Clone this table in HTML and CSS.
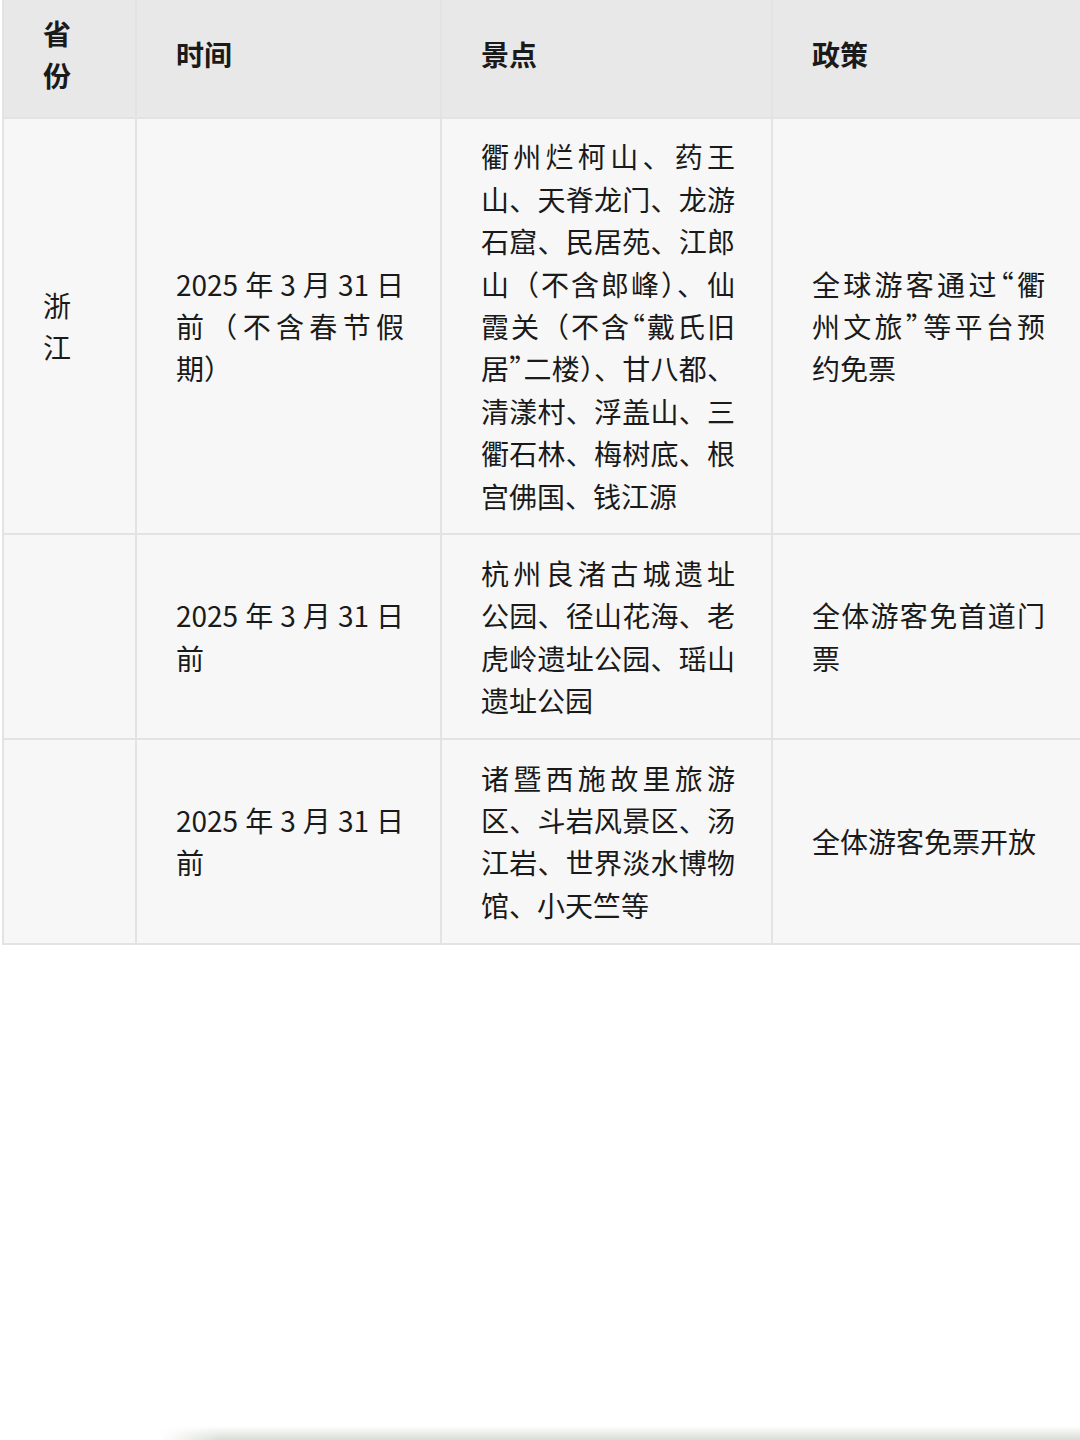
FILE: index.html
```html
<!DOCTYPE html>
<html lang="zh-CN">
<head>
<meta charset="utf-8">
<title>免票政策</title>
<link rel="stylesheet" href="styles.css">
</head>
<body>
<div class="page">
  <div class="table">
    <div class="cell head"><div class="txt"><span class="ln end">省</span><span class="ln end">份</span></div></div>
    <div class="cell head"><div class="txt"><span class="ln end">时间</span></div></div>
    <div class="cell head"><div class="txt"><span class="ln end">景点</span></div></div>
    <div class="cell head"><div class="txt"><span class="ln end">政策</span></div></div>

    <div class="cell"><div class="txt"><span class="ln end">浙</span><span class="ln end">江</span></div></div>
    <div class="cell"><div class="txt">
      <span class="ln">2025年3月31日</span>
      <span class="ln">前（不含春节假</span>
      <span class="ln end">期）</span>
    </div></div>
    <div class="cell"><div class="txt">
      <span class="ln">衢州烂柯山、药王</span>
      <span class="ln">山、天脊龙门、龙游</span>
      <span class="ln">石窟、民居苑、江郎</span>
      <span class="ln">山（不含郎峰）、仙</span>
      <span class="ln">霞关（不含<span class="q">“</span>戴氏旧</span>
      <span class="ln">居<span class="q">”</span>二楼）、甘八都、</span>
      <span class="ln">清漾村、浮盖山、三</span>
      <span class="ln">衢石林、梅树底、根</span>
      <span class="ln end">宫佛国、钱江源</span>
    </div></div>
    <div class="cell"><div class="txt">
      <span class="ln">全球游客通过<span class="q">“</span>衢</span>
      <span class="ln">州文旅<span class="q">”</span>等平台预</span>
      <span class="ln end">约免票</span>
    </div></div>

    <div class="cell"></div>
    <div class="cell"><div class="txt">
      <span class="ln">2025年3月31日</span>
      <span class="ln end">前</span>
    </div></div>
    <div class="cell"><div class="txt">
      <span class="ln">杭州良渚古城遗址</span>
      <span class="ln">公园、径山花海、老</span>
      <span class="ln">虎岭遗址公园、瑶山</span>
      <span class="ln end">遗址公园</span>
    </div></div>
    <div class="cell"><div class="txt">
      <span class="ln">全体游客免首道门</span>
      <span class="ln end">票</span>
    </div></div>

    <div class="cell"></div>
    <div class="cell"><div class="txt">
      <span class="ln">2025年3月31日</span>
      <span class="ln end">前</span>
    </div></div>
    <div class="cell"><div class="txt">
      <span class="ln">诸暨西施故里旅游</span>
      <span class="ln">区、斗岩风景区、汤</span>
      <span class="ln">江岩、世界淡水博物</span>
      <span class="ln end">馆、小天竺等</span>
    </div></div>
    <div class="cell"><div class="txt">
      <span class="ln end">全体游客免票开放</span>
    </div></div>
  </div>
  <div class="shadow"></div>
</div>
</body>
</html>
```

FILE: styles.css
```css
html, body {
  margin: 0;
  padding: 0;
  background: #ffffff;
}

.page {
  width: 1080px;
  height: 1440px;
  overflow: hidden;
  display: flex;
  flex-direction: column;
  font-family: "Noto Sans CJK SC", "Noto Sans", sans-serif;
  color: #1a1a1a;
}

.table {
  display: grid;
  grid-template-columns: 131px 303px 329px 308px;
  gap: 2px;
  margin-left: 2px;
  padding: 0 2px 2px 2px;
  background: #e3e3e3;
  width: max-content;
  font-size: 28px;
  line-height: 42.4px;
}

.cell {
  background: #f7f7f7;
  padding: 16.5px 36px 16.5px 39px;
  display: flex;
  align-items: center;
}

.cell.head {
  background: #e8e8e8;
  padding-top: 12px;
  padding-bottom: 20px;
  font-weight: 700;
}

.txt {
  width: 100%;
}

.ln {
  display: block;
  white-space: nowrap;
  text-align: justify;
  text-align-last: justify;
}

.ln.end {
  text-align: left;
  text-align-last: left;
}

.q {
  font-feature-settings: "halt";
}

.shadow {
  margin-top: auto;
  margin-left: 160px;
  height: 14px;
  background:
    linear-gradient(to right, #ffffff 0, rgba(255,255,255,0) 60px),
    linear-gradient(to bottom, rgba(255,255,255,0) 0, #e4e7e2 70%, #d9ddd6 100%);
}
```
